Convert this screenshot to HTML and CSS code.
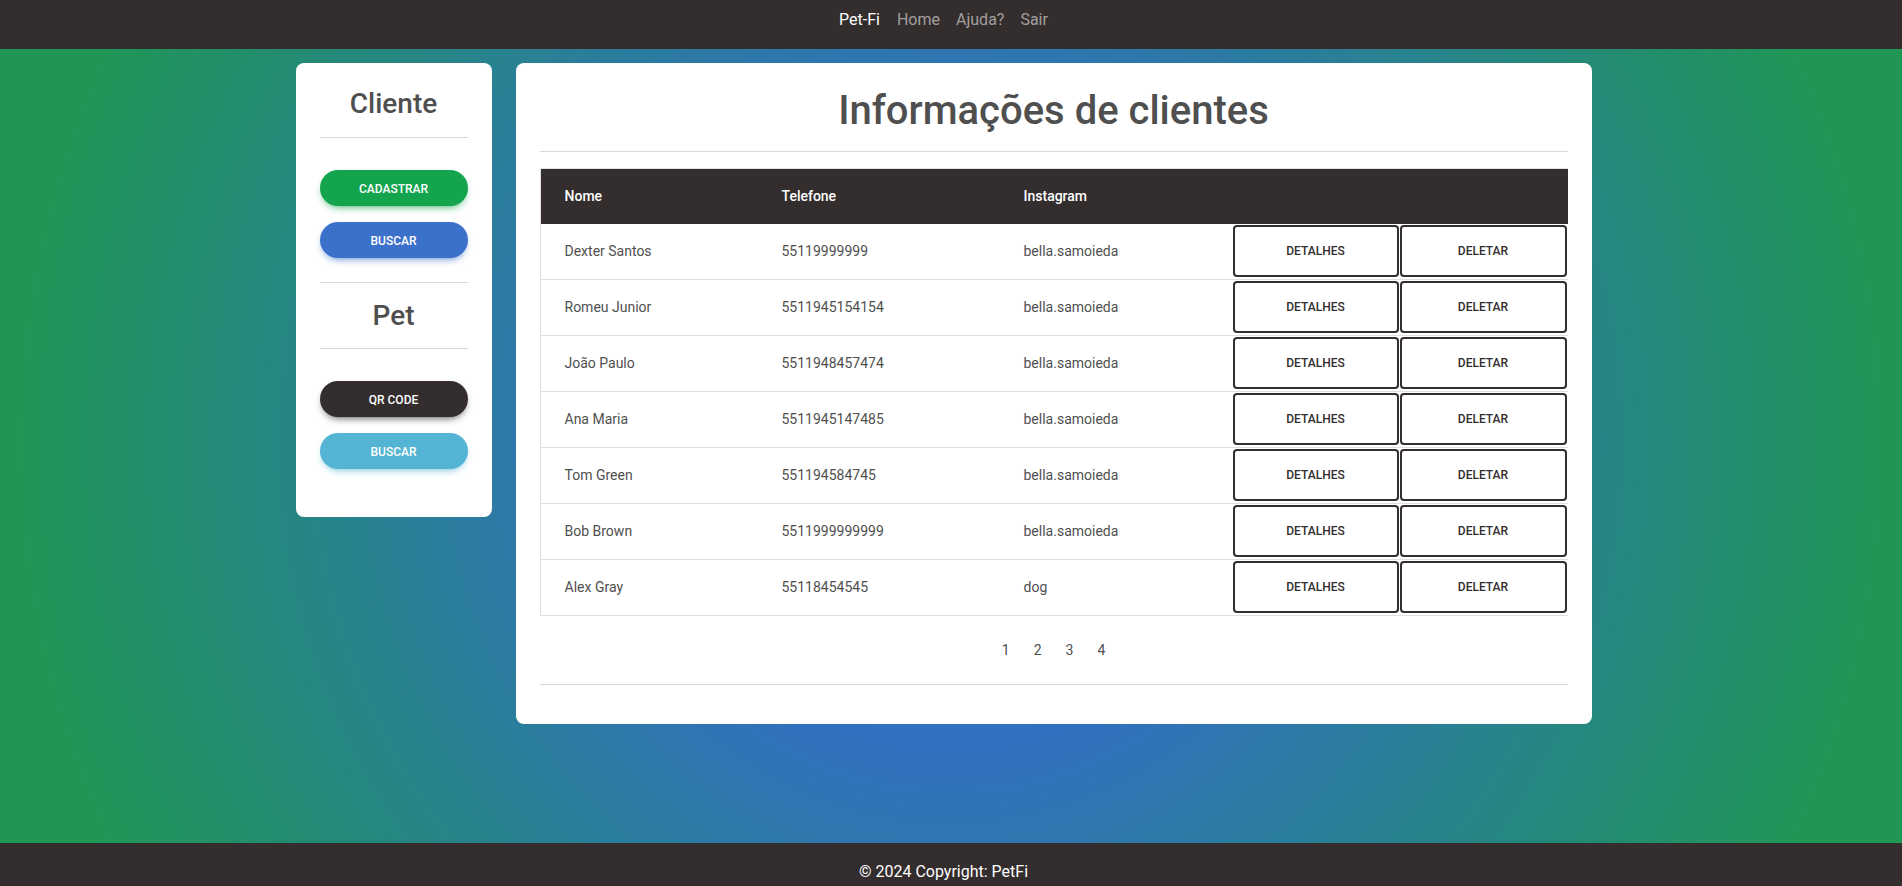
FILE: index.html
```html
<!DOCTYPE html>
<html lang="pt-BR">
<head>
<meta charset="utf-8">
<title>Pet-Fi</title>
<link rel="stylesheet" href="styles.css">
</head>
<body>
<nav class="navbar">
  <div class="nav-inner">
    <a class="brand" href="#">Pet-Fi</a>
    <a class="nav-link" href="#">Home</a>
    <a class="nav-link" href="#">Ajuda?</a>
    <a class="nav-link" href="#">Sair</a>
  </div>
</nav>

<main class="page">
  <div class="layout">
    <aside class="side-card">
      <h3 class="side-title">Cliente</h3>
      <hr class="divider">
      <div class="btn-stack">
        <button class="pill pill-success">Cadastrar</button>
        <button class="pill pill-primary">Buscar</button>
      </div>
      <hr class="divider">
      <h3 class="side-title">Pet</h3>
      <hr class="divider">
      <div class="btn-stack">
        <button class="pill pill-dark">QR Code</button>
        <button class="pill pill-info">Buscar</button>
      </div>
    </aside>

    <section class="main-card">
      <h1 class="main-title">Informações de clientes</h1>
      <hr class="divider">
      <div class="table">
        <div class="row head">
          <div class="cell">Nome</div>
          <div class="cell">Telefone</div>
          <div class="cell">Instagram</div>
          <div class="cell"></div>
          <div class="cell"></div>
        </div>
        <div class="row">
          <div class="cell">Dexter Santos</div>
          <div class="cell">55119999999</div>
          <div class="cell">bella.samoieda</div>
          <div class="act"><button class="outline">Detalhes</button></div>
          <div class="act"><button class="outline">Deletar</button></div>
        </div>
        <div class="row">
          <div class="cell">Romeu Junior</div>
          <div class="cell">5511945154154</div>
          <div class="cell">bella.samoieda</div>
          <div class="act"><button class="outline">Detalhes</button></div>
          <div class="act"><button class="outline">Deletar</button></div>
        </div>
        <div class="row">
          <div class="cell">João Paulo</div>
          <div class="cell">5511948457474</div>
          <div class="cell">bella.samoieda</div>
          <div class="act"><button class="outline">Detalhes</button></div>
          <div class="act"><button class="outline">Deletar</button></div>
        </div>
        <div class="row">
          <div class="cell">Ana Maria</div>
          <div class="cell">5511945147485</div>
          <div class="cell">bella.samoieda</div>
          <div class="act"><button class="outline">Detalhes</button></div>
          <div class="act"><button class="outline">Deletar</button></div>
        </div>
        <div class="row">
          <div class="cell">Tom Green</div>
          <div class="cell">551194584745</div>
          <div class="cell">bella.samoieda</div>
          <div class="act"><button class="outline">Detalhes</button></div>
          <div class="act"><button class="outline">Deletar</button></div>
        </div>
        <div class="row">
          <div class="cell">Bob Brown</div>
          <div class="cell">5511999999999</div>
          <div class="cell">bella.samoieda</div>
          <div class="act"><button class="outline">Detalhes</button></div>
          <div class="act"><button class="outline">Deletar</button></div>
        </div>
        <div class="row">
          <div class="cell">Alex Gray</div>
          <div class="cell">55118454545</div>
          <div class="cell">dog</div>
          <div class="act"><button class="outline">Detalhes</button></div>
          <div class="act"><button class="outline">Deletar</button></div>
        </div>
      </div>
      <ul class="pagination">
        <li><a href="#">1</a></li>
        <li><a href="#">2</a></li>
        <li><a href="#">3</a></li>
        <li><a href="#">4</a></li>
      </ul>
      <hr class="divider bottom">
    </section>
  </div>
</main>

<footer class="footer">© 2024 Copyright: PetFi</footer>
</body>
</html>
```

FILE: styles.css
```css
* { box-sizing: border-box; }

html, body { height: 100%; }

body {
  margin: 0;
  font-family: Roboto, "Liberation Sans", Arial, sans-serif;
  color: #4f4f4f;
  display: flex;
  flex-direction: column;
  min-height: 100vh;
  background: radial-gradient(circle at 50% 50%, #3170c2 28%, #1f9654 90%);
}

a { text-decoration: none; }

/* navbar */
.navbar {
  background: #332d2d;
  height: 49px;
  flex: none;
  padding-right: 15px;
}
.nav-inner {
  display: flex;
  justify-content: center;
  padding-top: 8px;
  font-size: 16px;
  line-height: 24px;
}
.brand {
  color: #fff;
  font-weight: 400;
  padding-right: 9px;
}
.nav-link {
  color: rgba(255, 255, 255, 0.55);
  padding: 0 8px;
}
.nav-link:last-child { padding-right: 0; }

/* page */
.page {
  flex: 1;
  padding: 14px 15px 0 0;
}
.layout {
  width: 1296px;
  margin: 0 auto;
  display: flex;
  gap: 24px;
  align-items: flex-start;
}

.divider {
  border: 0;
  border-top: 1px solid #d9d9d9;
  margin: 16px 0;
  height: 0;
}

/* sidebar */
.side-card {
  width: 196px;
  background: #fff;
  border-radius: 8px;
  padding: 24px;
  display: flex;
  flex-direction: column;
}
.side-title {
  margin: 0;
  font-size: 28px;
  line-height: 33.6px;
  font-weight: 500;
  text-align: center;
  color: #4f4f4f;
}
.btn-stack {
  display: flex;
  flex-direction: column;
  gap: 16px;
  margin: 16px 0 24px;
}
.side-card .divider { margin: 16px 0; }
.btn-stack + .divider { margin-top: 0; }

.pill {
  width: 148px;
  height: 36px;
  border: 0;
  border-radius: 999px;
  color: #fff;
  font-family: Roboto, "Liberation Sans", Arial, sans-serif;
  font-size: 12px;
  font-weight: 500;
  text-transform: uppercase;
  line-height: 18px;
  padding: 2px 0 0;
  cursor: pointer;
}
.pill-success { background: #14a44d; box-shadow: 0 4px 9px -4px #14a44d; }
.pill-primary { background: #3b71ca; box-shadow: 0 4px 9px -4px #3b71ca; }
.pill-dark { background: #332d2d; box-shadow: 0 4px 9px -4px #332d2d; }
.pill-info { background: #54b4d3; box-shadow: 0 4px 9px -4px #54b4d3; }

/* main card */
.main-card {
  width: 1076px;
  background: #fff;
  border-radius: 8px;
  padding: 24px;
}
.main-title {
  margin: 0;
  font-size: 40px;
  line-height: 48px;
  font-weight: 500;
  text-align: center;
  color: #4f4f4f;
}

.table {
  border-top: 1px solid #e0e0e0;
  border-left: 1px solid #e0e0e0;
}
.row {
  display: grid;
  grid-template-columns: 217px 242px 233px 167px 168px;
  height: 56px;
  border-bottom: 1px solid #e0e0e0;
  font-size: 14px;
  font-weight: 400;
  color: #4f4f4f;
}
.row.head {
  height: 55px;
  background: #332d2d;
  color: #fff;
  font-weight: 500;
  border-bottom: 0;
}
.cell {
  display: flex;
  align-items: center;
  padding: 0 24px;
  line-height: 21px;
}
.act {
  padding: 1px 1px 2px 0;
}
.outline {
  width: 100%;
  height: 100%;
  background: #fff;
  border: 2px solid #332d2d;
  border-radius: 4px;
  color: #332d2d;
  font-family: Roboto, "Liberation Sans", Arial, sans-serif;
  font-size: 12px;
  font-weight: 500;
  text-transform: uppercase;
  cursor: pointer;
}

.pagination {
  list-style: none;
  display: flex;
  justify-content: center;
  margin: 18px 0 0;
  padding: 0;
}
.pagination a {
  display: block;
  padding: 6px 12px;
  font-size: 14px;
  line-height: 21px;
  color: #4f4f4f;
}
.divider.bottom {
  margin: 17px 0 15px;
}

/* footer */
.footer {
  flex: none;
  height: 43px;
  background: #332d2d;
  color: #fff;
  text-align: center;
  font-size: 16px;
  line-height: 24px;
  padding: 17px 15px 0 0;
}
```
